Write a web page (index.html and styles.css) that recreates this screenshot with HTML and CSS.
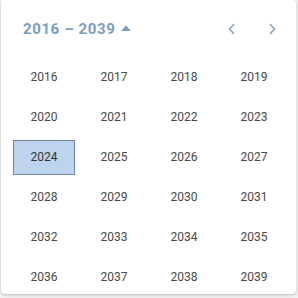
FILE: index.html
```html
<!DOCTYPE html>
<html lang="en">
<head>
    <meta charset="UTF-8">
    <meta name="viewport" content="width=device-width, initial-scale=1.0">
    <title>Year Picker</title>
    <link rel="stylesheet" href="styles.css">
</head>
<body>

    <div class="year-picker">
        <!-- Header -->
        <div class="picker-header">
            <button class="range-title">
                <span>2016 – 2039</span>
                <svg class="caret" width="10" height="6" viewBox="0 0 10 6"><path d="M0 6 L5 0.5 L10 6 Z" fill="currentColor"/></svg>
            </button>
            <div class="nav">
                <button class="nav-btn" aria-label="Previous">
                    <svg width="8" height="12" viewBox="0 0 8 12"><path d="M6 1 L1.5 6 L6 11" fill="none" stroke="currentColor" stroke-width="1.6"/></svg>
                </button>
                <button class="nav-btn" aria-label="Next">
                    <svg width="8" height="12" viewBox="0 0 8 12"><path d="M2 1 L6.5 6 L2 11" fill="none" stroke="currentColor" stroke-width="1.6"/></svg>
                </button>
            </div>
        </div>

        <!-- Years -->
        <div class="year-grid" id="yearGrid"></div>
    </div>

    <script>
        const grid = document.getElementById('yearGrid');
        const selected = 2024;

        for (let year = 2016; year <= 2039; year++) {
            const cell = document.createElement('div');
            cell.className = 'year-cell';
            const label = document.createElement('span');
            label.className = `year ${year === selected ? 'selected' : ''}`;
            label.textContent = year;
            cell.appendChild(label);
            grid.appendChild(cell);
        }
    </script>
</body>
</html>
```

FILE: styles.css
```css
* {
    margin: 0;
    padding: 0;
    box-sizing: border-box;
}

body {
    font-family: Roboto, "Liberation Sans", sans-serif;
    background-color: #f3f3f3;
    width: 298px;
    height: 298px;
    overflow: hidden;
}

/* Popup */
.year-picker {
    width: 295px;
    height: 294px;
    margin-left: 1px;
    background-color: #fff;
    border-radius: 4px;
    box-shadow: 0 1px 3px rgba(0, 0, 0, 0.25);
    overflow: hidden;
}

.picker-header {
    height: 57px;
    display: flex;
    align-items: center;
    justify-content: space-between;
    padding: 0 8px 0 22px;
}

button {
    background: none;
    border: none;
    font-family: inherit;
    cursor: pointer;
}

.range-title {
    display: flex;
    align-items: center;
    gap: 6px;
    color: #7a9ec0;
    font-size: 15px;
    font-weight: 700;
    letter-spacing: 0.6px;
    padding-top: 1px;
}

.caret {
    margin-bottom: 2px;
}

.nav {
    display: flex;
    gap: 8px;
}

.nav-btn {
    width: 32px;
    height: 32px;
    display: flex;
    align-items: center;
    justify-content: center;
    color: #86a6c6;
}

/* Grid */
.year-grid {
    display: grid;
    grid-template-columns: repeat(4, 70px);
    grid-auto-rows: 40px;
    padding-left: 8px;
}

.year-cell {
    display: flex;
    align-items: center;
    justify-content: center;
}

.year {
    width: 62px;
    height: 35px;
    display: flex;
    align-items: center;
    justify-content: center;
    font-size: 12px;
    color: #484848;
    border: 1px solid transparent;
}

.year.selected {
    background-color: #bdd3ee;
    border-color: #6e87a5;
    color: #333;
}
```
